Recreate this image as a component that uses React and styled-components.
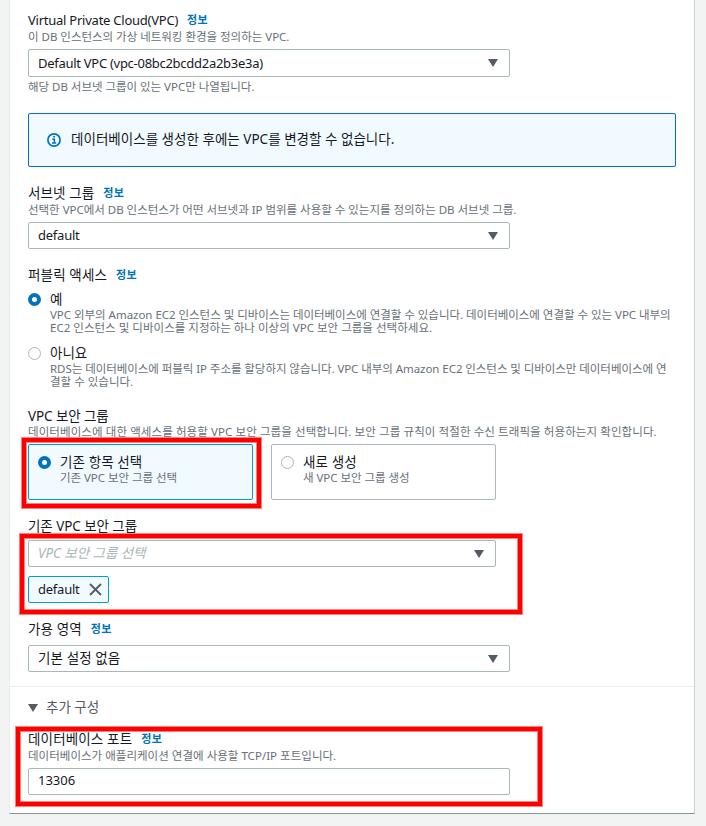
import React from 'react';
import styled, { createGlobalStyle, css } from 'styled-components';

const colors = {
  page: '#f2f3f3',
  white: '#ffffff',
  text: '#16191f',
  hint: '#687078',
  muted: '#545b64',
  placeholder: '#aab7b8',
  border: '#aab7b8',
  link: '#0073bb',
  selected: '#00a1c9',
  selectedBg: '#f1faff',
  marker: '#ff0000',
};

const GlobalStyle = createGlobalStyle`
  * {
    box-sizing: border-box;
  }

  body {
    margin: 0;
    background: ${colors.page};
    color: ${colors.text};
    font-family: 'Noto Sans', 'Noto Sans CJK KR', sans-serif;
    overflow: hidden;
  }
`;

const tracking = css`
  letter-spacing: ${props => props.$tracking || 0}px;
  white-space: nowrap;
`;

const Page = styled.main`
  height: 826px;
  padding: 0 11px 0 9px;
`;

const Panel = styled.section`
  height: 814px;

  background: ${colors.white};
  border: 1px solid #eaeded;
  border-top: 0;
  border-right-color: #ccd1d1;
  border-bottom-color: #879596;
`;

const Body = styled.div`
  height: 686px;
  padding: 11px 18px 0;
`;

const Footer = styled.div`
  padding: 11px 18px 0;

  border-top: 1px solid #eaeded;
`;

const Field = styled.div`
  margin-top: ${props => props.$gap || 0}px;
  width: ${props => props.$width || 482}px;
`;

const Label = styled.div`
  height: 18px;

  display: flex;
  align-items: center;

  font-size: ${props => props.$size || 13.5}px;
  line-height: 18px;
  ${tracking}
`;

const InfoLink = styled.a`
  margin-left: 9px;

  color: ${colors.link};
  font-size: 11px;
  font-weight: 700;
  letter-spacing: 0.4px;
`;

const Hint = styled.div`
  margin-top: ${props => props.$gap || 0}px;

  color: ${colors.hint};
  font-size: 11.5px;
  line-height: 13px;
  ${tracking}
`;

const Control = styled.div`
  margin-top: ${props => props.$gap || 6}px;
  padding: 0 11px 0 9px;
  height: ${props => props.$height || 27}px;

  display: flex;
  align-items: center;
  justify-content: space-between;

  background: ${colors.white};
  border: 1px solid ${colors.border};
  border-radius: 2px;
`;

const Value = styled.span`
  padding-bottom: ${props => props.$lift || 0}px;

  font-size: ${props => props.$size || 13}px;
  line-height: 18px;
  ${tracking}
`;

const Placeholder = styled(Value)`
  color: ${colors.placeholder};
  font-style: italic;
`;

const Alert = styled.div`
  margin-top: 20px;
  padding: 0 18px;
  width: 648px;
  height: 54px;

  display: flex;
  align-items: center;

  background: ${colors.selectedBg};
  border: 1px solid ${colors.link};
  border-radius: 2px;
`;

const AlertText = styled.span`
  margin-left: 10px;
  padding-bottom: 2px;

  font-size: 13.5px;
  line-height: 18px;
  ${tracking}
`;

const RadioRow = styled.div`
  margin-top: ${props => props.$gap}px;

  display: flex;
`;

const Radio = styled.span`
  margin-top: 3px;
  width: 13px;
  height: 13px;
  flex: none;

  background: ${colors.white};
  border: ${props => (props.$checked ? `4px solid ${colors.link}` : `1px solid ${colors.border}`)};
  border-radius: 50%;
`;

const RadioText = styled.div`
  margin-left: 9px;
`;

const Tiles = styled.div`
  margin-top: 6px;

  display: flex;
  gap: 18px;
`;

const Tile = styled.div`
  padding: 8px 9px 0;
  width: 225px;
  height: 56px;

  display: flex;

  background: ${props => (props.$checked ? colors.selectedBg : colors.white)};
  border: 1px solid ${props => (props.$checked ? colors.selected : colors.border)};
  border-radius: 2px;
`;

const Marked = styled.div`
  position: relative;
`;

// Red frame laid over the group that it points at
const Marker = styled.div`
  position: absolute;
  top: ${props => props.$top}px;
  right: ${props => props.$right}px;
  bottom: ${props => props.$bottom}px;
  left: ${props => props.$left}px;

  border: 4px solid ${colors.marker};
  box-shadow: 0 0 0 1px rgba(255, 0, 0, 0.5), inset 0 0 0 1px rgba(255, 0, 0, 0.5);
  pointer-events: none;
`;

const Chip = styled.div`
  margin-top: 9px;
  padding: 0 6px 0 9px;
  width: 81px;
  height: 27px;

  display: flex;
  align-items: center;
  justify-content: space-between;

  background: ${colors.selectedBg};
  border: 1px solid ${colors.selected};
  border-radius: 2px;
`;

const Expander = styled.div`
  height: 18px;

  display: flex;
  align-items: center;
  gap: 8px;

  color: ${colors.muted};
`;

const CaretSvg = styled.svg`
  margin-top: ${props => props.$drop || 0}px;

  display: block;
  flex: none;
`;

const Caret = ({ drop }) => (
  <CaretSvg $drop={drop} width="10" height="8" viewBox="0 0 10 8">
    <path d="M0 0h10L5 8z" fill={colors.muted} />
  </CaretSvg>
);

const InfoIcon = () => (
  <svg width="14" height="14" viewBox="0 0 14 14" fill="none" stroke={colors.link}>
    <circle cx="7" cy="7" r="6.1" strokeWidth="1.7" />
    <path d="M5.2 6.3H7.4V10M5 10.1H9.2" strokeWidth="1.5" />
    <path d="M6.2 3.8H8" strokeWidth="1.6" />
  </svg>
);

const CloseIcon = () => (
  <svg width="13" height="13" viewBox="0 0 13 13" fill="none" stroke={colors.muted}>
    <path d="M1 1l11 11M12 1L1 12" strokeWidth="1.8" />
  </svg>
);

const RadioOption = ({ checked, label, children, gap }) => (
  <RadioRow $gap={gap}>
    <Radio $checked={checked} />
    <RadioText>
      <Label>{label}</Label>
      {children}
    </RadioText>
  </RadioRow>
);

const TileOption = ({ checked, label, hint }) => (
  <Tile $checked={checked}>
    <Radio $checked={checked} />
    <RadioText>
      <Label $tracking={0.1}>{label}</Label>
      <Hint $tracking={-0.05}>{hint}</Hint>
    </RadioText>
  </Tile>
);

export default function App() {
  return (
    <Page>
      <GlobalStyle />
      <Panel>
        <Body>
          <Field>
            <Label $size={13} $tracking={-0.24}>
              Virtual Private Cloud(VPC)
              <InfoLink>정보</InfoLink>
            </Label>
            <Hint $gap={1} $tracking={-0.02}>이 DB 인스턴스의 가상 네트워킹 환경을 정의하는 VPC.</Hint>
            <Control $height={28}>
              <Value $lift={1} $tracking={-0.28}>Default VPC (vpc-08bc2bcdd2a2b3e3a)</Value>
              <Caret />
            </Control>
            <Hint $gap={3} $tracking={-0.03}>해당 DB 서브넷 그룹이 있는 VPC만 나열됩니다.</Hint>
          </Field>
          <Alert>
            <InfoIcon />
            <AlertText $tracking={0.02}>데이터베이스를 생성한 후에는 VPC를 변경할 수 없습니다.</AlertText>
          </Alert>

          <Field $gap={17}>
            <Label $tracking={0.1}>
              서브넷 그룹
              <InfoLink>정보</InfoLink>
            </Label>
            <Hint $gap={1} $tracking={-0.02}>
              선택한 VPC에서 DB 인스턴스가 어떤 서브넷과 IP 범위를 사용할 수 있는지를 정의하는 DB 서브넷 그룹.
            </Hint>
            <Control>
              <Value $lift={2} $tracking={-0.24}>default</Value>
              <Caret />
            </Control>
          </Field>

          <Field $gap={17} $width={648}>
            <Label $tracking={0.15}>
              퍼블릭 액세스
              <InfoLink>정보</InfoLink>
            </Label>
            <RadioOption checked label="예" gap={6}>
              <Hint $tracking={-0.03}>
                VPC 외부의 Amazon EC2 인스턴스 및 디바이스는 데이터베이스에 연결할 수 있습니다. 데이터베이스에 연결할 수 있는 VPC 내부의
              </Hint>
              <Hint $tracking={0.02}>EC2 인스턴스 및 디바이스를 지정하는 하나 이상의 VPC 보안 그룹을 선택하세요.</Hint>
            </RadioOption>
            <RadioOption label="아니요" gap={10}>
              <Hint $tracking={-0.06}>
                RDS는 데이터베이스에 퍼블릭 IP 주소를 할당하지 않습니다. VPC 내부의 Amazon EC2 인스턴스 및 디바이스만 데이터베이스에 연
              </Hint>
              <Hint>결할 수 있습니다.</Hint>
            </RadioOption>
          </Field>

          <Field $gap={19} $width={648}>
            <Label $tracking={-0.1}>VPC 보안 그룹</Label>
            <Hint $tracking={0.09}>
              데이터베이스에 대한 액세스를 허용할 VPC 보안 그룹을 선택합니다. 보안 그룹 규칙이 적절한 수신 트래픽을 허용하는지 확인합니다.
            </Hint>
            <Tiles>
              <Marked>
                <TileOption checked label="기존 항목 선택" hint="기존 VPC 보안 그룹 선택" />
                <Marker $top={-6} $right={-8} $bottom={-8} $left={-6} />
              </Marked>
              <TileOption label="새로 생성" hint="새 VPC 보안 그룹 생성" />
            </Tiles>
          </Field>

          <Field $gap={17} $width={468}>
            <Label $tracking={-0.07}>기존 VPC 보안 그룹</Label>
            <Marked>
              <Control $gap={5}>
                <Placeholder $lift={2} $size={13.5} $tracking={-0.05}>VPC 보안 그룹 선택</Placeholder>
                <Caret />
              </Control>
              <Chip>
                <Value $lift={1} $tracking={-0.24}>default</Value>
                <CloseIcon />
              </Chip>
              <Marker $top={-6} $right={-26} $bottom={-11} $left={-8} />
            </Marked>
          </Field>

          <Field $gap={17}>
            <Label $tracking={0.1}>
              가용 영역
              <InfoLink>정보</InfoLink>
            </Label>
            <Control $gap={7}>
              <Value $lift={2} $size={13.5} $tracking={0.1}>기본 설정 없음</Value>
              <Caret />
            </Control>
          </Field>
        </Body>

        <Footer>
          <Expander>
            <Caret drop={2} />
            <Value $size={13.5}>추가 구성</Value>
          </Expander>
          <Field $gap={14}>
            <Marked>
              <Label $tracking={0.15}>
                데이터베이스 포트
                <InfoLink>정보</InfoLink>
              </Label>
              <Hint $gap={1} $tracking={0.02}>데이터베이스가 애플리케이션 연결에 사용할 TCP/IP 포트입니다.</Hint>
              <Control $gap={6}>
                <Value $lift={3}>13306</Value>
              </Control>
              <Marker $top={-3} $right={-32} $bottom={-11} $left={-12} />
            </Marked>
          </Field>
        </Footer>
      </Panel>
    </Page>
  );
}
